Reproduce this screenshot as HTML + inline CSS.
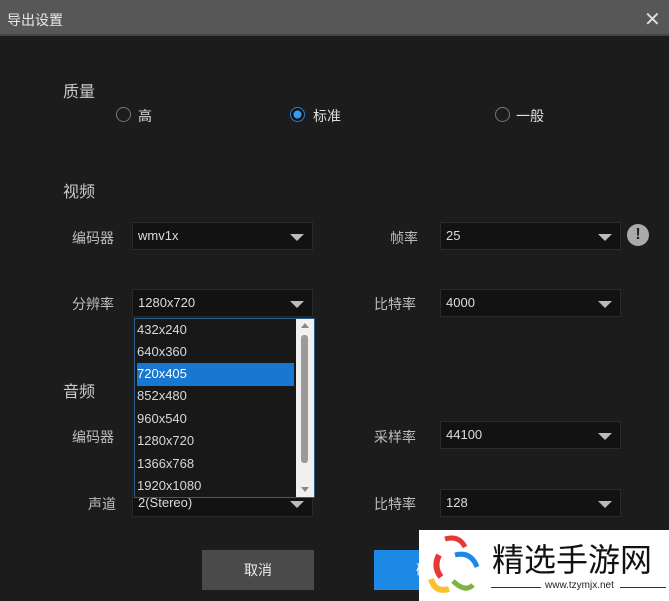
<!DOCTYPE html>
<html><head><meta charset="utf-8"><style>
*{margin:0;padding:0;box-sizing:border-box}
body{width:669px;height:601px;background:#1c1c1c;position:relative;overflow:hidden;font-family:"Liberation Sans","Noto Sans CJK SC",sans-serif;color:#d0d0d0;font-size:14px}
.a{position:absolute;white-space:nowrap}
.title{left:0;top:0;width:669px;height:36px;background:#575757;border-bottom:2px solid #444}
.lbl{color:#bdbdbd;font-size:14px}
.h{color:#c8c8c8;font-size:16px}
.sel{background:#121212;border:1px solid #2a2a2a;height:28px;width:181px;padding-left:5px;line-height:26px;color:#dcdcdc;font-size:13px}
.sel::after{content:"";position:absolute;right:8px;top:11px;border-left:7px solid transparent;border-right:7px solid transparent;border-top:7px solid #bbb}
.rad{width:15px;height:15px;border-radius:50%;border:1.5px solid #777}
.dd{left:134px;top:318px;width:181px;height:180px;background:#181818;border:1px solid #2c5f8e}
.it{position:absolute;left:2px;height:22.5px;line-height:22.5px;font-size:13px;color:#d8d8d8;width:157px}
.btn{height:40px;line-height:40px;text-align:center;font-size:14px}
</style></head><body>
<div class="a title"></div>
<div class="a" style="left:7px;top:10px;font-size:14px;color:#e8e8e8">导出设置</div>
<div class="a" style="left:644px;top:7px;font-size:20px;color:#ddd">✕</div>

<div class="a h" style="left:63px;top:78px">质量</div>
<div class="a rad" style="left:116px;top:107px"></div><div class="a lbl" style="left:138px;top:106px;color:#ddd">高</div>
<div class="a rad" style="left:290px;top:107px;border-color:#2b7fd0;background:radial-gradient(circle,#3a9af0 0 3.5px,#111 4.5px)"></div><div class="a lbl" style="left:313px;top:106px;color:#ddd">标准</div>
<div class="a rad" style="left:495px;top:107px"></div><div class="a lbl" style="left:516px;top:106px;color:#ddd">一般</div>

<div class="a h" style="left:63px;top:178px">视频</div>
<div class="a lbl" style="left:72px;top:228px">编码器</div>
<div class="a sel" style="left:132px;top:222px">wmv1x</div>
<div class="a lbl" style="left:390px;top:228px">帧率</div>
<div class="a sel" style="left:440px;top:222px">25</div>
<div class="a" style="left:627px;top:224px;width:22px;height:22px;border-radius:50%;background:#aaa;color:#222;font-weight:bold;text-align:center;line-height:22px;font-size:16px">!</div>

<div class="a lbl" style="left:72px;top:294px">分辨率</div>
<div class="a sel" style="left:132px;top:289px">1280x720</div>
<div class="a lbl" style="left:374px;top:294px">比特率</div>
<div class="a sel" style="left:440px;top:289px">4000</div>

<div class="a h" style="left:63px;top:378px">音频</div>
<div class="a lbl" style="left:72px;top:427px">编码器</div>
<div class="a lbl" style="left:374px;top:427px">采样率</div>
<div class="a sel" style="left:440px;top:421px">44100</div>

<div class="a lbl" style="left:88px;top:494px">声道</div>
<div class="a sel" style="left:132px;top:489px">2(Stereo)</div>
<div class="a lbl" style="left:374px;top:494px">比特率</div>
<div class="a sel" style="left:440px;top:489px">128</div>

<div class="a dd">
<div class="it" style="top:0">432x240</div>
<div class="it" style="top:22px">640x360</div>
<div class="it" style="top:44px;background:#1877d0;color:#fff">720x405</div>
<div class="it" style="top:66px">852x480</div>
<div class="it" style="top:88.5px">960x540</div>
<div class="it" style="top:111px">1280x720</div>
<div class="it" style="top:133.5px">1366x768</div>
<div class="it" style="top:156px">1920x1080</div>
<div class="a" style="left:161px;top:0;width:18px;height:178px;background:#f0f0f0">
<div class="a" style="left:5px;top:4px;border-left:4px solid transparent;border-right:4px solid transparent;border-bottom:5px solid #888"></div>
<div class="a" style="left:5px;top:16px;width:7px;height:128px;background:#9a9a9a;border-radius:3px"></div>
<div class="a" style="left:5px;top:168px;border-left:4px solid transparent;border-right:4px solid transparent;border-top:5px solid #888"></div>
</div>
</div>

<div class="a btn" style="left:202px;top:550px;width:112px;background:#4a4a4a;color:#eee">取消</div>
<div class="a btn" style="left:374px;top:550px;width:112px;background:#1e88e5;color:#fff">确定</div>

<div class="a" style="left:419px;top:530px;width:250px;height:71px;background:#fff"></div>
<svg class="a" style="left:425px;top:533px" width="62" height="66" viewBox="0 0 62 66">
<path d="M20 6 Q34 2 40 14" stroke="#e53935" stroke-width="5" fill="none"/>
<path d="M14 22 Q8 34 16 44" stroke="#e53935" stroke-width="6" fill="none"/>
<path d="M30 22 Q46 18 52 34" stroke="#1e88e5" stroke-width="5" fill="none"/>
<path d="M6 46 Q10 60 24 56" stroke="#fbc02d" stroke-width="6" fill="none"/>
<path d="M28 48 Q40 60 48 52" stroke="#7cb342" stroke-width="5" fill="none"/>
</svg>
<div class="a" style="left:492px;top:538px;font-size:32px;color:#111;font-family:'Noto Sans CJK SC',sans-serif;line-height:40px">精选手游网</div>
<div class="a" style="left:491px;top:587px;width:50px;height:1px;background:#333"></div>
<div class="a" style="left:545px;top:580px;font-size:10px;color:#222">www.tzymjx.net</div>
<div class="a" style="left:620px;top:587px;width:46px;height:1px;background:#333"></div>
</body></html>
